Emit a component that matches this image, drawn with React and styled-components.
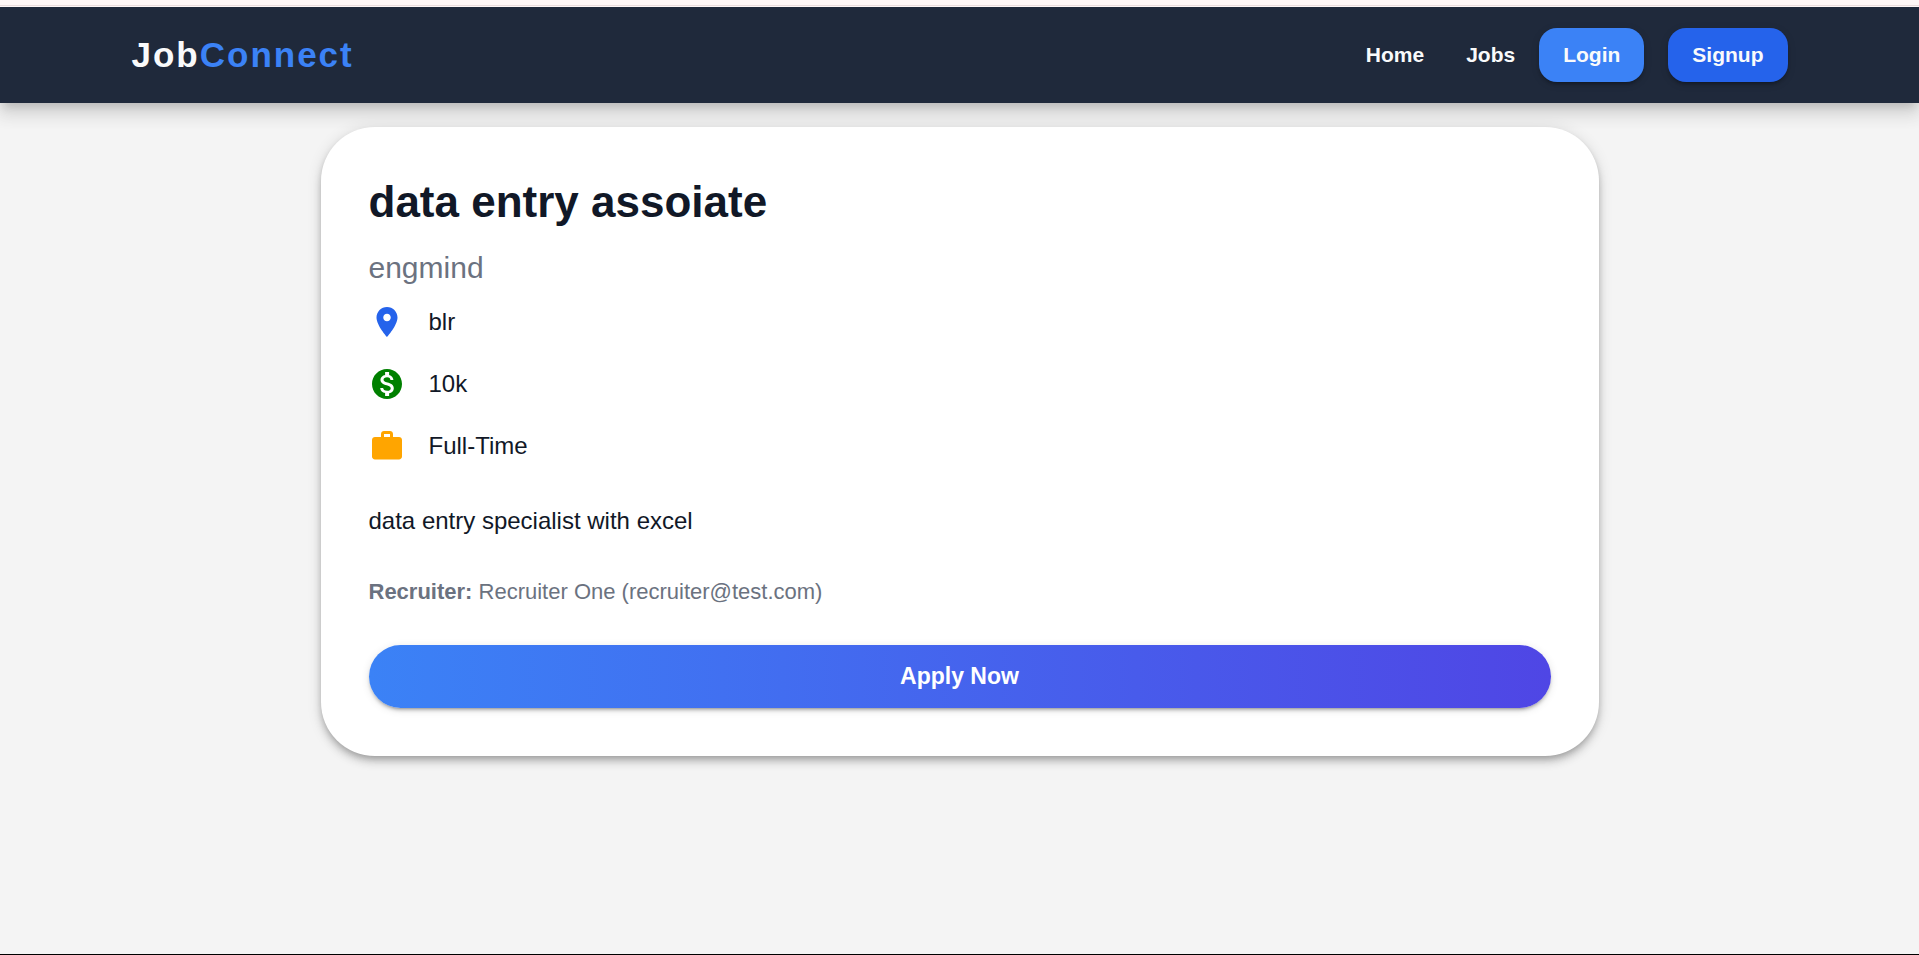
import React from "react";
import styled, { createGlobalStyle } from "styled-components";

const GlobalStyle = createGlobalStyle`
  *, *::before, *::after { box-sizing: border-box; }
  body {
    margin: 0;
    background: #f4f4f4;
    color: #111827;
    font-family: "Liberation Sans", Arial, Helvetica, sans-serif;
  }
`;

const Page = styled.div`
  display: flex;
  flex-direction: column;
  min-height: 100vh;
  border-bottom: 1px solid #000;
`;

const TopStrip = styled.div`
  height: 7px;
  background: linear-gradient(#fff7f6 5px, #ebdddd 5px 6px, #fff7f6 6px);
`;

const Header = styled.header`
  background: #1f293b;
  box-shadow: 0 8px 8px -4px rgba(0, 0, 0, 0.12), 0 12px 15px 2px rgba(0, 0, 0, 0.07),
    0 4px 21px 3px rgba(0, 0, 0, 0.08);
  clip-path: inset(0 0 -48px 0);
`;

const HeaderInner = styled.div`
  display: flex;
  align-items: center;
  justify-content: space-between;
  width: 100%;
  max-width: 1728px;
  min-height: 96px;
  margin: 0 auto;
  padding: 0 36px;
`;

const Logo = styled.a`
  color: #f9fafb;
  font-size: 35px;
  font-weight: 700;
  letter-spacing: 2px;
  text-decoration: none;
`;

const LogoAccent = styled.span`
  color: #3b82f6;
`;

const Nav = styled.nav`
  display: flex;
  align-items: center;
  gap: 24px;
`;

const NavLinks = styled.div`
  display: flex;
  gap: 42px;
`;

const NavLink = styled.a`
  color: #f9fafb;
  font-size: 21px;
  font-weight: 700;
  text-decoration: none;
`;

const NavButton = styled.button`
  height: 54px;
  padding: 0 24px;
  border: 0;
  border-radius: 18px;
  background: ${({ $tone }) => $tone};
  color: #f9fafb;
  font: inherit;
  font-size: 21px;
  font-weight: 700;
  box-shadow: 0 4px 2px -3px rgba(0, 0, 0, 0.2), 0 3px 3px 0 rgba(0, 0, 0, 0.14),
    0 2px 8px 0 rgba(0, 0, 0, 0.12);
  cursor: pointer;
`;

const Main = styled.main`
  position: relative;
  width: 100%;
  max-width: 1350px;
  margin: 0 auto;
  padding: 24px 36px;
`;

const Card = styled.article`
  padding: 48px;
  border-radius: 54px;
  background: #fff;
  box-shadow: 0 4px 6px -2px rgba(0, 0, 0, 0.2), 0 6px 8px 0 rgba(0, 0, 0, 0.14),
    0 2px 15px 0 rgba(0, 0, 0, 0.12);
`;

const Title = styled.h1`
  margin: 0 0 15px;
  font-size: 44px;
  font-weight: 700;
  line-height: 54px;
`;

const Company = styled.p`
  margin: 0;
  color: #6b7280;
  font-size: 30px;
  line-height: 48px;
`;

const Facts = styled.ul`
  display: flex;
  flex-direction: column;
  gap: 26px;
  margin: 12px 0 0;
  padding: 0;
  list-style: none;
`;

const Fact = styled.li`
  display: flex;
  align-items: center;
  gap: 24px;
  font-size: 24px;
  line-height: 36px;
`;

const FactIcon = styled.svg`
  width: 36px;
  height: 36px;
  fill: ${({ $tone }) => $tone};
`;

const Description = styled.p`
  margin: 38px 0 36px;
  font-size: 24px;
  line-height: 38px;
`;

const Recruiter = styled.p`
  margin: 0;
  color: #6b7280;
  font-size: 22px;
  line-height: 32px;
`;

const ApplyButton = styled.button`
  width: 100%;
  height: 63px;
  margin-top: 37px;
  border: 0;
  border-radius: 36px;
  background: linear-gradient(90deg, #3b82f6, #4f46e5);
  color: #fff;
  font: inherit;
  font-size: 23px;
  font-weight: 700;
  box-shadow: 0 4px 2px -3px rgba(0, 0, 0, 0.2), 0 3px 3px 0 rgba(0, 0, 0, 0.14),
    0 2px 8px 0 rgba(0, 0, 0, 0.12);
  cursor: pointer;
`;

const facts = [
  {
    text: "blr",
    tone: "#2563eb",
    path: "M12 2C8.13 2 5 5.13 5 9c0 5.25 7 13 7 13s7-7.75 7-13c0-3.87-3.13-7-7-7m0 9.5c-1.38 0-2.5-1.12-2.5-2.5s1.12-2.5 2.5-2.5 2.5 1.12 2.5 2.5-1.12 2.5-2.5 2.5",
  },
  {
    text: "10k",
    tone: "green",
    path: "M12 2C6.48 2 2 6.48 2 12s4.48 10 10 10 10-4.48 10-10S17.52 2 12 2m1.41 16.09V20h-2.67v-1.93c-1.71-.36-3.16-1.46-3.27-3.4h1.96c.1 1.05.82 1.87 2.65 1.87 1.96 0 2.4-.98 2.4-1.59 0-.83-.44-1.61-2.67-2.14-2.48-.6-4.18-1.62-4.18-3.67 0-1.72 1.39-2.84 3.11-3.21V4h2.67v1.95c1.86.45 2.79 1.86 2.85 3.39H14.3c-.05-1.11-.64-1.87-2.22-1.87-1.5 0-2.4.68-2.4 1.64 0 .84.65 1.39 2.67 1.91s4.18 1.39 4.18 3.91c-.01 1.83-1.38 2.83-3.12 3.16",
  },
  {
    text: "Full-Time",
    tone: "orange",
    path: "M20 6h-4V4c0-1.11-.89-2-2-2h-4c-1.11 0-2 .89-2 2v2H4c-1.11 0-1.99.89-1.99 2L2 19c0 1.11.89 2 2 2h16c1.11 0 2-.89 2-2V8c0-1.11-.89-2-2-2m-6 0h-4V4h4z",
  },
];

export default function App() {
  return (
    <>
      <GlobalStyle />
      <Page>
        <TopStrip />
        <Header>
          <HeaderInner>
            <Logo href="#">
              Job<LogoAccent>Connect</LogoAccent>
            </Logo>
            <Nav>
              <NavLinks>
                <NavLink href="#">Home</NavLink>
                <NavLink href="#">Jobs</NavLink>
              </NavLinks>
              <NavButton type="button" $tone="#3b82f6">Login</NavButton>
              <NavButton type="button" $tone="#2563eb">Signup</NavButton>
            </Nav>
          </HeaderInner>
        </Header>
        <Main>
          <Card>
            <Title>data entry assoiate</Title>
            <Company>engmind</Company>
            <Facts>
              {facts.map((fact) => (
                <Fact key={fact.text}>
                  <FactIcon viewBox="0 0 24 24" aria-hidden="true" $tone={fact.tone}>
                    <path d={fact.path} />
                  </FactIcon>
                  {fact.text}
                </Fact>
              ))}
            </Facts>
            <Description>data entry specialist with excel</Description>
            <Recruiter>
              <strong>Recruiter:</strong> Recruiter One (recruiter@test.com)
            </Recruiter>
            <ApplyButton type="button">Apply Now</ApplyButton>
          </Card>
        </Main>
      </Page>
    </>
  );
}
